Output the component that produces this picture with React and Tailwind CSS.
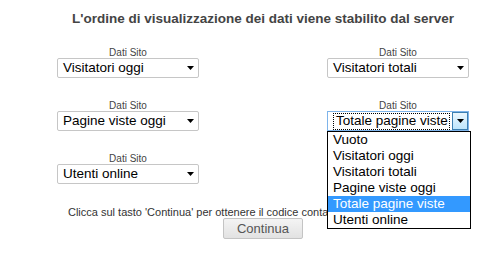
import React from "react";

const options = [
  "Vuoto",
  "Visitatori oggi",
  "Visitatori totali",
  "Pagine viste oggi",
  "Totale pagine viste",
  "Utenti online",
];

const Arrow = () => (
  <svg width="7" height="4" viewBox="0 0 7 4" className="block">
    <path d="M0 0h7L3.5 4z" fill="#000" />
  </svg>
);

const Select = ({ value, open }) => {
  if (open) {
    return (
      <div className="relative">
        <div className="flex h-[20px] w-[142px] items-center border border-[#7eb4ea] bg-white">
          <div className="ml-[5px] flex h-[17px] flex-1 items-center border border-dotted border-black pl-[2px] text-[13.5px] leading-none text-black">
            {value}
          </div>
          <div className="ml-[2px] flex h-[18px] w-[16px] items-center justify-center border border-[#3c7fb1] bg-gradient-to-b from-[#eaf6fd] to-[#bee6fd]">
            <Arrow />
          </div>
        </div>
        <ul className="absolute left-0 top-[20px] z-10 w-[144px] border border-black bg-white py-0 text-[13.5px] leading-[16px] text-black">
          {options.map((o) => (
            <li
              key={o}
              className={
                o === value
                  ? "h-[16px] bg-[#3399ff] pl-[5px] text-white"
                  : "h-[16px] pl-[5px]"
              }
            >
              {o}
            </li>
          ))}
        </ul>
      </div>
    );
  }
  return (
    <div className="flex h-[20px] w-[142px] items-center justify-between rounded-[2px] border border-[#c6c6c6] bg-white pl-[5px] pr-[3px] text-[13.5px] leading-none text-black">
      <span>{value}</span>
      <span className="mr-[1px]">
        <Arrow />
      </span>
    </div>
  );
};

const Field = ({ value, open }) => (
  <div className="flex w-[142px] flex-col items-center">
    <div className="h-[10px] text-[10px] leading-[10px] text-[#444]">Dati Sito</div>
    <Select value={value} open={open} />
  </div>
);

export default function App() {
  return (
    <div className="h-[277px] w-[504px] overflow-hidden bg-white font-['Liberation_Sans',Arial,sans-serif]">
      <div className="ml-[57px] w-[412px] pt-[11px]">
        <h1 className="text-center text-[13.5px] font-bold leading-[16px] text-[#444]">
          L'ordine di visualizzazione dei dati viene stabilito dal server
        </h1>
        <div className="mt-[21px] flex flex-col gap-[23px]">
          <div className="flex justify-between">
            <Field value="Visitatori oggi" />
            <Field value="Visitatori totali" />
          </div>
          <div className="relative z-10 flex justify-between">
            <Field value="Pagine viste oggi" />
            <Field value="Totale pagine viste" open />
          </div>
          <div className="flex justify-between">
            <Field value="Utenti online" />
          </div>
        </div>
        <p className="mt-[22px] whitespace-nowrap text-center text-[11px] leading-[12px] text-[#333]">
          Clicca sul tasto 'Continua' per ottenere il codice contatore da inserire nel tuo sito
        </p>
        <div className="flex justify-center">
          <button className="h-[21px] w-[80px] rounded-[2px] border border-[#c4c4c4] bg-gradient-to-b from-[#f4f4f4] to-[#e2e2e2] text-[13px] leading-none text-[#555]">
            Continua
          </button>
        </div>
      </div>
    </div>
  );
}
